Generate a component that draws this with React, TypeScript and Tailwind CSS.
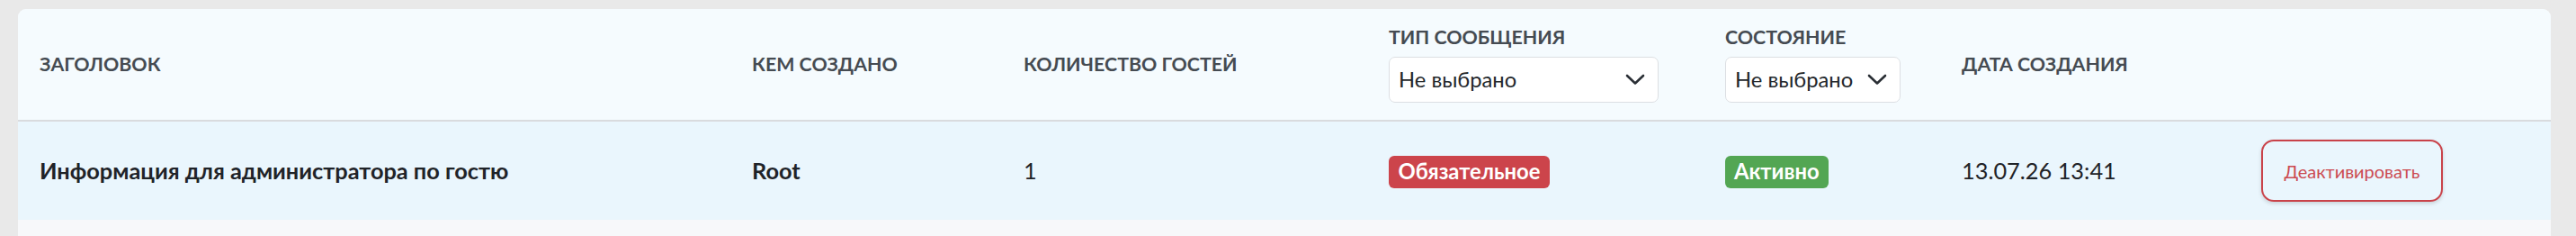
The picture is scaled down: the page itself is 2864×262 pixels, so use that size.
import React from "react";

const Chevron = () => (
  <svg width="22" height="13" viewBox="0 0 22 13" fill="none" className="shrink-0">
    <path d="M2 2 L11 10.5 L20 2" stroke="#2a2f35" strokeWidth="2.6" strokeLinecap="round" strokeLinejoin="round" />
  </svg>
);

const Select = ({ className }: { className: string }) => (
  <div
    className={`flex h-[51px] items-center justify-between rounded-[7px] border-[1.5px] border-[#dcdfe3] bg-white pl-[10px] pr-[14px] text-[23.75px] text-[#23272b] ${className}`}
  >
    <span>Не выбрано</span>
    <Chevron />
  </div>
);

const headLabel = "text-[21.4px] font-bold uppercase leading-[25px] text-[#454b52]";

export default function App() {
  return (
    <div className="h-[262px] overflow-hidden bg-[#e9e9e9] pl-[20px] pr-[28px] pt-[10px] font-['Lato','Noto_Sans',sans-serif]">
      <div className="overflow-hidden rounded-t-[9px] bg-[#f7f8fa]">
        <div className="grid h-[123px] grid-cols-[792px_302px_406px_374px_263px_333px_1fr] items-center bg-[#f5fbfe] px-[24px]">
          <div className={headLabel}>Заголовок</div>
          <div className={headLabel}>Кем создано</div>
          <div className={headLabel}>Количество гостей</div>
          <div className="flex flex-col gap-[9px]">
            <div className={headLabel}>Тип сообщения</div>
            <Select className="w-[300px]" />
          </div>
          <div className="flex flex-col gap-[9px]">
            <div className={headLabel}>Состояние</div>
            <Select className="w-[195px]" />
          </div>
          <div className={headLabel}>Дата создания</div>
          <div />
        </div>
        <div className="h-[2px] bg-[#d9dbde]" />
        <div className="grid h-[109px] grid-cols-[792px_302px_406px_374px_263px_333px_1fr] items-center bg-[#eaf6fd] px-[24px] text-[25.35px] text-[#1f2328]">
          <div className="font-bold">Информация для администратора по гостю</div>
          <div className="font-bold">Root</div>
          <div>1</div>
          <div>
            <span className="inline-flex h-[36px] items-center rounded-[6px] bg-[#cc444b] px-[10.5px] text-[23.8px] font-bold text-white">
              Обязательное
            </span>
          </div>
          <div>
            <span className="inline-flex h-[36px] items-center rounded-[6px] bg-[#53a653] px-[10px] text-[23.8px] font-bold text-white">
              Активно
            </span>
          </div>
          <div>13.07.26 13:41</div>
          <div>
            <button className="flex h-[69px] w-[202px] items-center justify-center rounded-[14px] border-2 border-[#c9434a] text-[20px] text-[#cc4b51] shadow-[0_2px_4px_rgba(0,0,0,0.15)]">
              Деактивировать
            </button>
          </div>
        </div>
        <div className="h-[18px]" />
      </div>
    </div>
  );
}
